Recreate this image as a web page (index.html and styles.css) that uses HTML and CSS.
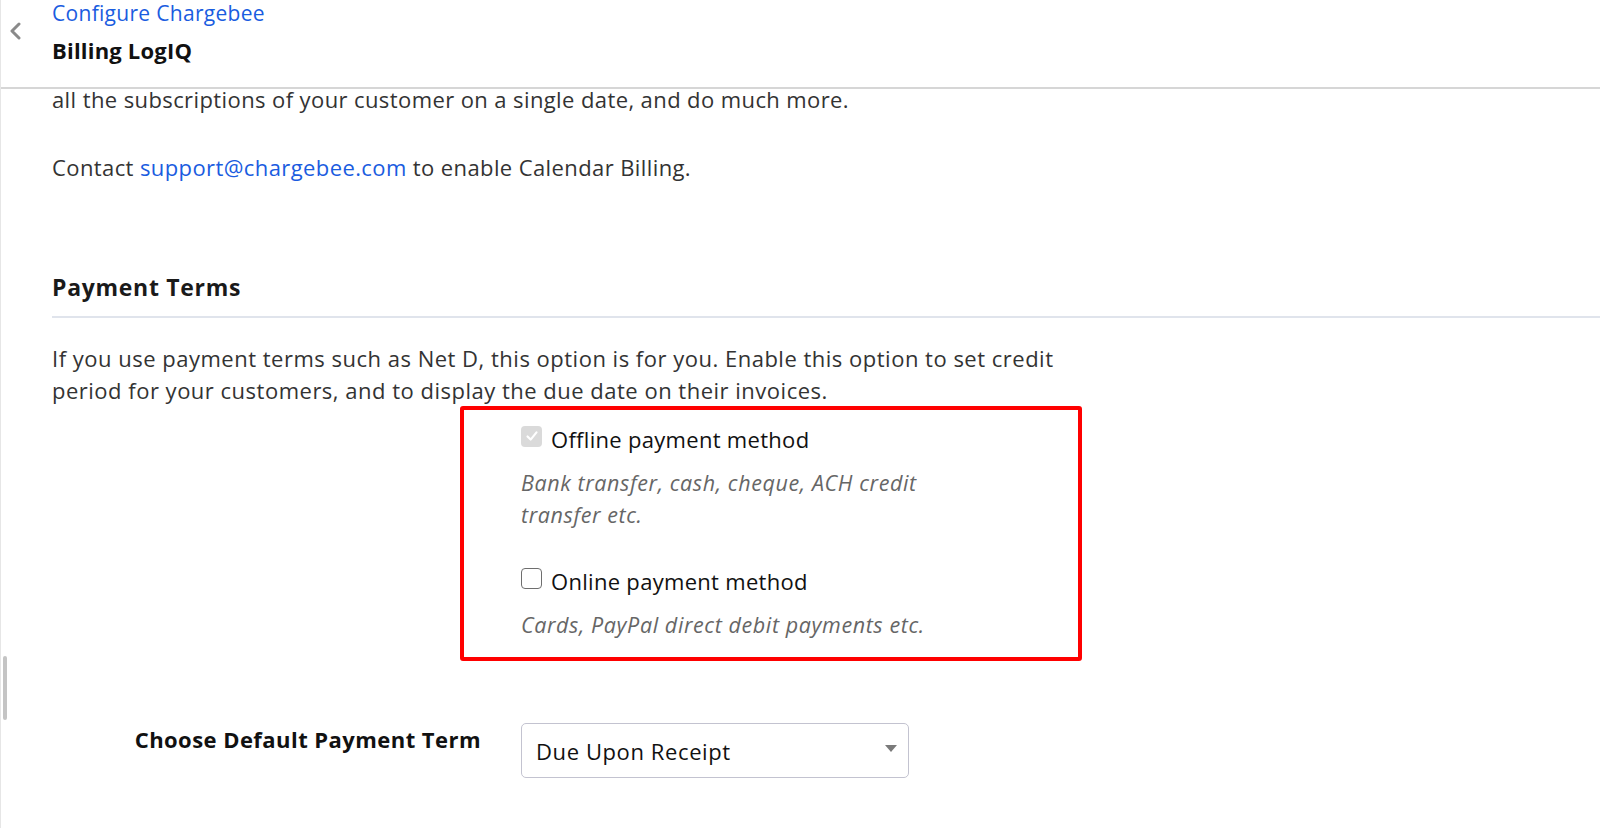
FILE: index.html
```html
<!DOCTYPE html>
<html lang="en">
<head>
    <meta charset="UTF-8">
    <meta name="viewport" content="width=device-width, initial-scale=1.0">
    <title>Billing LogIQ - Configure Chargebee</title>
    <link rel="stylesheet" href="styles.css">
</head>
<body>
    <div class="page">
        <header class="top-bar">
            <a href="#" class="back-link" aria-label="Back">
                <svg width="14" height="18" viewBox="0 0 14 18">
                    <path d="M10 2 L3 9 L10 16" fill="none" stroke="#8a8a8a" stroke-width="3" stroke-linecap="round" stroke-linejoin="round"/>
                </svg>
            </a>
            <div class="crumbs">
                <a href="#" class="crumb-link">Configure Chargebee</a>
                <div class="page-title">Billing LogIQ</div>
            </div>
        </header>

        <main class="content">
            <p class="intro">all the subscriptions of your customer on a single date, and do much more.</p>
            <p class="contact">Contact <a href="#">support@chargebee.com</a> to enable Calendar Billing.</p>

            <section class="settings-block">
                <h2 class="block-title">Payment Terms</h2>
                <p class="block-desc">If you use payment terms such as Net D, this option is for you. Enable this option to set credit period for your customers, and to display the due date on their invoices.</p>

                <div class="method-box">
                    <label class="method">
                        <input type="checkbox" checked disabled>
                        <span class="method-name">Offline payment method</span>
                    </label>
                    <p class="method-hint">Bank transfer, cash, cheque, ACH credit transfer etc.</p>

                    <label class="method">
                        <input type="checkbox">
                        <span class="method-name">Online payment method</span>
                    </label>
                    <p class="method-hint">Cards, PayPal direct debit payments etc.</p>
                </div>

                <div class="form-row">
                    <label class="form-label" for="termSelect">Choose Default Payment Term</label>
                    <div class="select-wrap">
                        <select id="termSelect" class="term-select">
                            <option>Due Upon Receipt</option>
                            <option>Net 15</option>
                            <option>Net 30</option>
                            <option>Net 45</option>
                        </select>
                    </div>
                </div>
            </section>
        </main>

        <div class="scroll-thumb"></div>
    </div>
</body>
</html>
```

FILE: styles.css
```css
* {
    margin: 0;
    padding: 0;
    box-sizing: border-box;
}

body {
    font-family: 'Open Sans', 'Liberation Sans', sans-serif;
    color: #333;
    background: #fff;
    overflow: hidden;
}

a {
    color: #1a5ce0;
    text-decoration: none;
}

.page {
    position: relative;
    min-height: 828px;
    border-left: 1px solid #e6e6e6;
}

/* top bar with breadcrumb */
.top-bar {
    display: flex;
    height: 89px;
    border-bottom: 2px solid #d6d6d6;
}

.back-link {
    width: 51px;
    padding: 22px 0 0 8px;
}

.crumbs {
    display: flex;
    flex-direction: column;
    margin-top: -2px;
}

.crumb-link {
    font-size: 21px;
    letter-spacing: 0.3px;
    line-height: 30px;
}

.page-title {
    font-size: 22px;
    font-weight: 700;
    letter-spacing: 0.2px;
    color: #111;
    line-height: 30px;
    margin-top: 7px;
}

/* scrolled content */
.content {
    padding: 0 0 0 51px;
    font-size: 22px;
    letter-spacing: 0.4px;
    line-height: 32px;
}

.intro {
    margin-top: -6px;
}

.contact {
    margin-top: 36px;
}

.settings-block {
    margin-top: 89px;
}

.block-title {
    font-size: 23px;
    font-weight: 700;
    letter-spacing: 0.7px;
    color: #1a1a1a;
    line-height: 30px;
    padding-bottom: 14px;
    border-bottom: 2px solid #e0e4ec;
}

.block-desc {
    max-width: 1060px;
    letter-spacing: 0.5px;
    margin-top: 24px;
}

.method-box {
    width: 622px;
    margin-left: 408px;
    padding: 13px 0 16px 57px;
    border: 4px solid #ff0000;
    border-radius: 3px;
}

.method {
    display: flex;
    align-items: center;
    gap: 9px;
    color: #111;
    line-height: 32px;
}

.method input {
    appearance: none;
    flex-shrink: 0;
    width: 21px;
    height: 21px;
    border: 1.5px solid #6e6e6e;
    border-radius: 4px;
    background: #fff;
    margin-top: -6px;
}

.method input:checked {
    border: none;
    background: #dadada url("data:image/svg+xml,%3Csvg xmlns='http://www.w3.org/2000/svg' viewBox='0 0 20 20'%3E%3Cpath d='M5 10.5 L8.5 14 L15 6' fill='none' stroke='white' stroke-width='2.4' stroke-linecap='round' stroke-linejoin='round'/%3E%3C/svg%3E") center / 18px no-repeat;
}

.method-name {
    font-size: 22px;
    letter-spacing: 0.3px;
}

.method-hint {
    max-width: 430px;
    color: #666;
    font-size: 21.5px;
    letter-spacing: 0.6px;
    font-style: italic;
    margin: 12px 0 34px;
}

.method-hint:last-child {
    margin-bottom: 0;
}

.form-row {
    display: grid;
    grid-template-columns: 429px 388px;
    column-gap: 40px;
    margin-top: 62px;
}

.form-label {
    text-align: right;
    font-weight: 700;
    font-size: 22px;
    letter-spacing: 0.45px;
    color: #111;
    line-height: 32px;
}

.select-wrap {
    position: relative;
}

.select-wrap::after {
    content: '';
    position: absolute;
    right: 12px;
    top: 22px;
    border-left: 6px solid transparent;
    border-right: 6px solid transparent;
    border-top: 7px solid #7a7a7a;
    pointer-events: none;
}

.term-select {
    appearance: none;
    width: 100%;
    height: 55px;
    padding: 0 36px 0 14px;
    font-family: inherit;
    font-size: 22px;
    letter-spacing: 0.6px;
    color: #111;
    background: #fff;
    border: 1.5px solid #c3c3d0;
    border-radius: 5px;
}

/* overlay scroll indicator on the left edge */
.scroll-thumb {
    position: absolute;
    left: 2px;
    top: 656px;
    width: 4px;
    height: 64px;
    border-radius: 2px;
    background: #c4c4c4;
}
```
